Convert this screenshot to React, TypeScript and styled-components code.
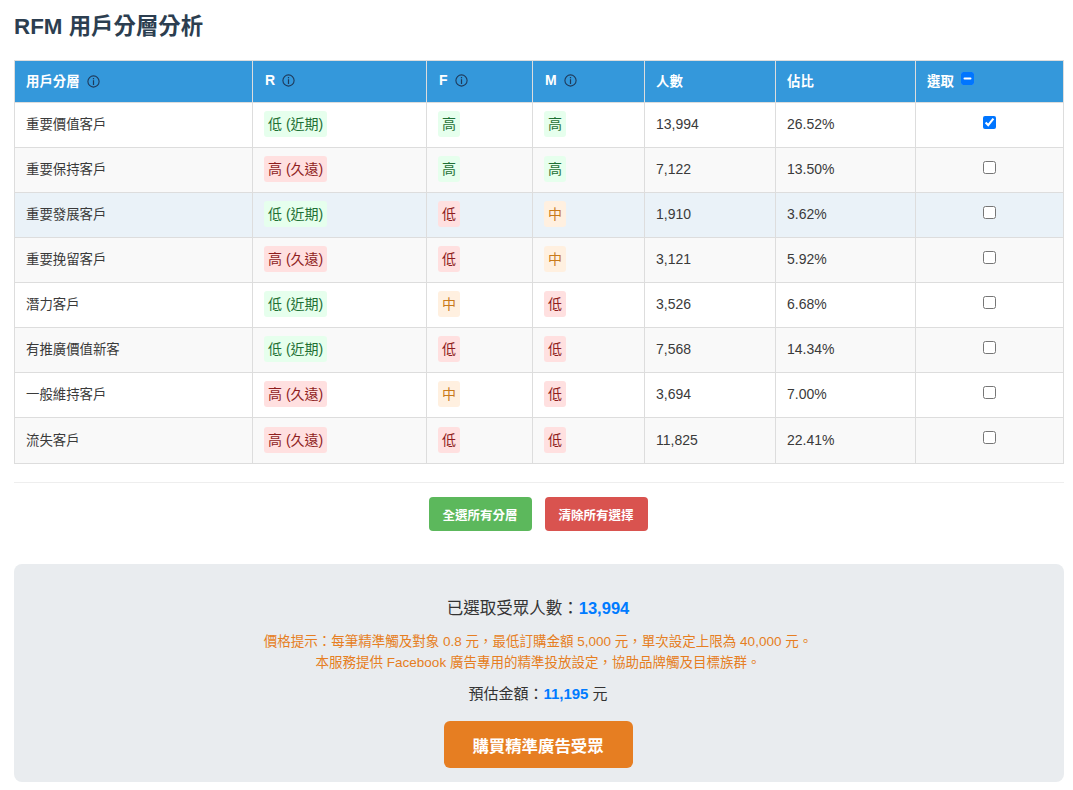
import React, { useEffect, useRef } from "react";
import styled, { createGlobalStyle } from "styled-components";

const FONT = `"Liberation Sans", "Noto Sans CJK TC", sans-serif`;

const Global = createGlobalStyle`
  html, body { margin: 0; padding: 0; background: #fff; }
  body { font-family: ${FONT}; color: #333; }
`;

const Page = styled.div`
  width: 1050px;
  padding: 0 9px 8px 14px;
`;

const Title = styled.h2`
  margin: 0;
  padding-top: 13px;
  height: 60px;
  box-sizing: border-box;
  font-size: 22.4px;
  line-height: 28px;
  font-weight: 700;
  color: #2c3e50;
`;

const Table = styled.table`
  width: 1049px;
  table-layout: fixed;
  border-collapse: collapse;
  font-size: 14px;
`;

const Th = styled.th<{ $latin?: boolean }>`
  background: #3498db;
  color: #fff;
  border: 1px solid #ddd;
  height: 42px;
  box-sizing: border-box;
  padding: 0 12px 3px ${(p) => (p.$latin ? "12px" : "11px")};
  text-align: left;
  font-size: ${(p) => (p.$latin ? "14px" : "13.4px")};
  font-weight: 700;
`;

const Tr = styled.tr<{ $tone: "white" | "gray" | "blue"; $last?: boolean }>`
  height: ${(p) => (p.$last ? "46px" : "45px")};
  background: ${(p) => (p.$tone === "white" ? "#fff" : p.$tone === "gray" ? "#f9f9f9" : "#eaf2f8")};
`;

const Td = styled.td<{ $center?: boolean; $name?: boolean }>`
  border: 1px solid #ddd;
  box-sizing: border-box;
  padding: 0 12px ${(p) => (p.$name ? "4px" : "2px")} 11px;
  color: #3a3a3a;
  font-size: ${(p) => (p.$name ? "13.4px" : "14px")};
  text-align: ${(p) => (p.$center ? "center" : "left")};
`;

const COLORS = {
  g: { bg: "#e6ffed", fg: "#1e7034" },
  r: { bg: "#ffe0e0", fg: "#8f1d1d" },
  o: { bg: "#fff0e0", fg: "#c97a1a" },
};

const Badge = styled.span<{ $k: "g" | "r" | "o" }>`
  display: inline-block;
  padding: 3px 4px;
  line-height: 20px;
  border-radius: 3px;
  background: ${(p) => COLORS[p.$k].bg};
  color: ${(p) => COLORS[p.$k].fg};
`;

const InfoSvg = styled.svg`
  width: 13px;
  height: 13px;
  margin-left: 7px;
  vertical-align: -2px;
`;

const Check = styled.input`
  width: 13px;
  height: 13px;
  margin: 0;
  vertical-align: 1px;
`;

const HeadCheck = styled(Check)`
  margin-left: 7px;
  vertical-align: 1px;
`;

const Divider = styled.hr`
  border: 0;
  border-top: 1px solid #eee;
  margin: 18px 0 14px;
`;

const Actions = styled.div`
  display: flex;
  justify-content: center;
  gap: 13px;
  padding-right: 2px;
`;

const SmallButton = styled.button<{ $bg: string }>`
  width: 103px;
  height: 34px;
  border: 0;
  border-radius: 4px;
  background: ${(p) => p.$bg};
  color: #fff;
  font-family: ${FONT};
  font-size: 12.5px;
  font-weight: 700;
  padding: 0;
`;

const Summary = styled.section`
  margin-top: 33px;
  height: 218px;
  box-sizing: border-box;
  background: #e9ecef;
  border-radius: 8px;
  padding: 33px 2px 0 0;
  display: flex;
  flex-direction: column;
  align-items: center;
  text-align: center;
`;

const Count = styled.div`
  font-size: 16.5px;
  line-height: 22px;
  color: #333;
`;

const Strong = styled.strong`
  color: #007bff;
`;

const Hint = styled.p`
  margin: 12px 0 0;
  font-size: 13.5px;
  line-height: 21px;
  color: #e67e22;
`;

const Estimate = styled.div`
  margin-top: 11px;
  font-size: 15px;
  line-height: 20px;
  color: #333;
`;

const BuyButton = styled.button`
  margin-top: 17px;
  width: 189px;
  height: 47px;
  border: 0;
  border-radius: 6px;
  background: #e67e22;
  color: #fff;
  font-family: ${FONT};
  font-size: 16.4px;
  font-weight: 700;
  padding: 0;
`;

const Info = () => (
  <InfoSvg viewBox="0 0 13 13" aria-hidden="true">
    <circle cx="6.5" cy="6.5" r="5.6" fill="none" stroke="#1f3a5a" strokeWidth="1.1" />
    <rect x="5.9" y="5.2" width="1.2" height="4.8" fill="#1f3a5a" />
    <rect x="5.9" y="3" width="1.2" height="1.3" fill="#1f3a5a" />
  </InfoSvg>
);

const Indeterminate = () => {
  const ref = useRef<HTMLInputElement>(null);
  useEffect(() => {
    if (ref.current) ref.current.indeterminate = true;
  }, []);
  return <HeadCheck ref={ref} type="checkbox" readOnly />;
};

type K = "g" | "r" | "o";
const label: Record<K, string> = { g: "高", r: "低", o: "中" };

const rows: { name: string; r: "low" | "high"; f: K; m: K; n: string; p: string; on?: boolean; tone: "white" | "gray" | "blue" }[] = [
  { name: "重要價值客戶", r: "low", f: "g", m: "g", n: "13,994", p: "26.52%", on: true, tone: "white" },
  { name: "重要保持客戶", r: "high", f: "g", m: "g", n: "7,122", p: "13.50%", tone: "gray" },
  { name: "重要發展客戶", r: "low", f: "r", m: "o", n: "1,910", p: "3.62%", tone: "blue" },
  { name: "重要挽留客戶", r: "high", f: "r", m: "o", n: "3,121", p: "5.92%", tone: "gray" },
  { name: "潛力客戶", r: "low", f: "o", m: "r", n: "3,526", p: "6.68%", tone: "white" },
  { name: "有推廣價值新客", r: "low", f: "r", m: "r", n: "7,568", p: "14.34%", tone: "gray" },
  { name: "一般維持客戶", r: "high", f: "o", m: "r", n: "3,694", p: "7.00%", tone: "white" },
  { name: "流失客戶", r: "high", f: "r", m: "r", n: "11,825", p: "22.41%", tone: "gray" },
];

const widths = [238, 174, 106, 112, 131, 140, 148];

export default function App() {
  return (
    <Page>
      <Global />
      <Title>RFM 用戶分層分析</Title>
      <Table>
        <colgroup>
          {widths.map((w, i) => (
            <col key={i} style={{ width: w }} />
          ))}
        </colgroup>
        <thead>
          <tr>
            <Th>用戶分層<Info /></Th>
            <Th $latin>R<Info /></Th>
            <Th $latin>F<Info /></Th>
            <Th $latin>M<Info /></Th>
            <Th>人數</Th>
            <Th>佔比</Th>
            <Th>選取<Indeterminate /></Th>
          </tr>
        </thead>
        <tbody>
          {rows.map((row, i) => (
            <Tr key={row.name} $tone={row.tone} $last={i === rows.length - 1}>
              <Td $name>{row.name}</Td>
              <Td>
                {row.r === "low" ? <Badge $k="g">低 (近期)</Badge> : <Badge $k="r">高 (久遠)</Badge>}
              </Td>
              <Td><Badge $k={row.f}>{label[row.f]}</Badge></Td>
              <Td><Badge $k={row.m}>{label[row.m]}</Badge></Td>
              <Td>{row.n}</Td>
              <Td>{row.p}</Td>
              <Td $center><Check type="checkbox" defaultChecked={row.on} /></Td>
            </Tr>
          ))}
        </tbody>
      </Table>
      <Divider />
      <Actions>
        <SmallButton $bg="#5cb85c">全選所有分層</SmallButton>
        <SmallButton $bg="#d9534f">清除所有選擇</SmallButton>
      </Actions>
      <Summary>
        <Count>已選取受眾人數：<Strong>13,994</Strong></Count>
        <Hint>
          價格提示：每筆精準觸及對象 0.8 元，最低訂購金額 5,000 元，單次設定上限為 40,000 元。
          <br />
          本服務提供 Facebook 廣告專用的精準投放設定，協助品牌觸及目標族群。
        </Hint>
        <Estimate>預估金額：<Strong>11,195</Strong> 元</Estimate>
        <BuyButton>購買精準廣告受眾</BuyButton>
      </Summary>
    </Page>
  );
}
